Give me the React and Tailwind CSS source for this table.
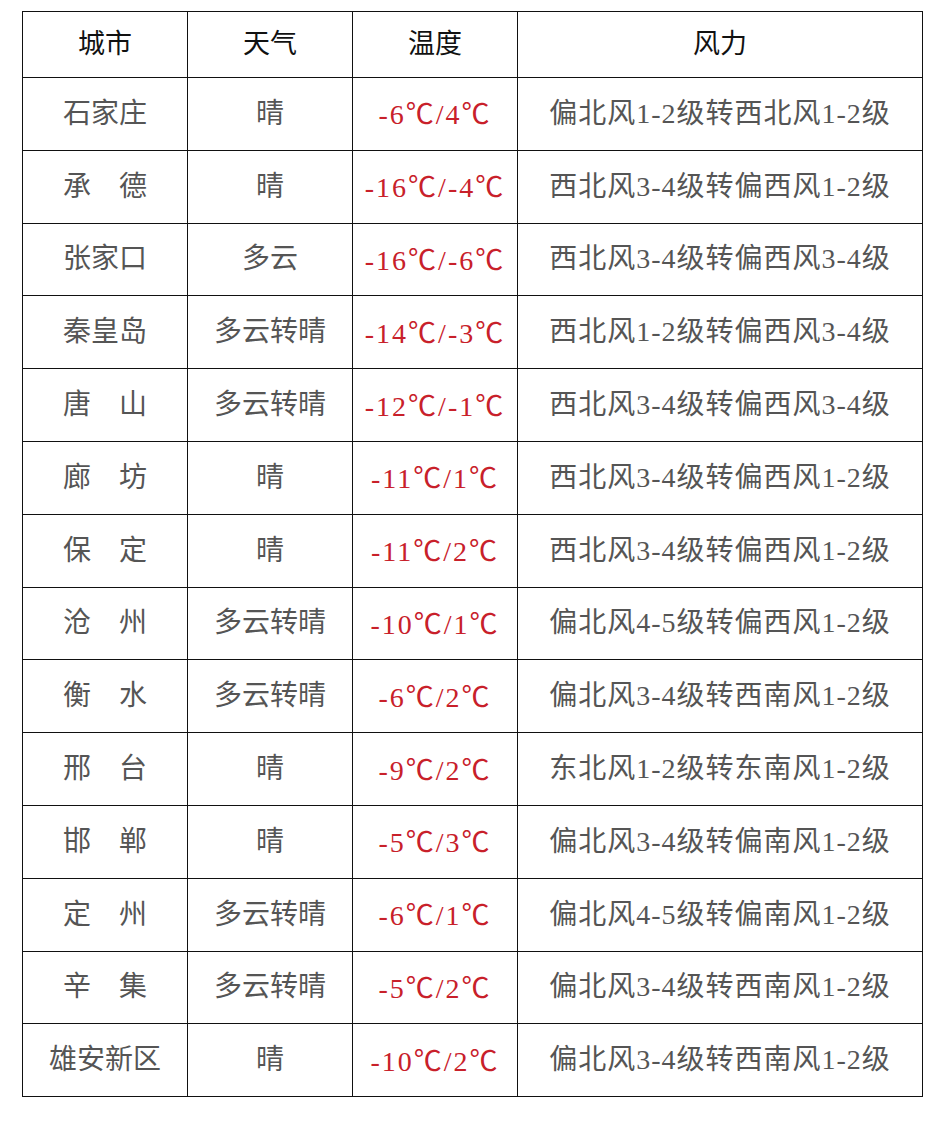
import React from "react";

const ROWS = [
  ["石家庄", "晴", "-6℃/4℃", "偏北风1-2级转西北风1-2级"],
  ["承　德", "晴", "-16℃/-4℃", "西北风3-4级转偏西风1-2级"],
  ["张家口", "多云", "-16℃/-6℃", "西北风3-4级转偏西风3-4级"],
  ["秦皇岛", "多云转晴", "-14℃/-3℃", "西北风1-2级转偏西风3-4级"],
  ["唐　山", "多云转晴", "-12℃/-1℃", "西北风3-4级转偏西风3-4级"],
  ["廊　坊", "晴", "-11℃/1℃", "西北风3-4级转偏西风1-2级"],
  ["保　定", "晴", "-11℃/2℃", "西北风3-4级转偏西风1-2级"],
  ["沧　州", "多云转晴", "-10℃/1℃", "偏北风4-5级转偏西风1-2级"],
  ["衡　水", "多云转晴", "-6℃/2℃", "偏北风3-4级转西南风1-2级"],
  ["邢　台", "晴", "-9℃/2℃", "东北风1-2级转东南风1-2级"],
  ["邯　郸", "晴", "-5℃/3℃", "偏北风3-4级转偏南风1-2级"],
  ["定　州", "多云转晴", "-6℃/1℃", "偏北风4-5级转偏南风1-2级"],
  ["辛　集", "多云转晴", "-5℃/2℃", "偏北风3-4级转西南风1-2级"],
  ["雄安新区", "晴", "-10℃/2℃", "偏北风3-4级转西南风1-2级"],
];

const FONT = { fontFamily: '"Liberation Serif", "Noto Sans CJK SC", serif' };

// ℃ drawn from the CJK font so it is full width, as in the original
function Temp({ value }) {
  const parts = value.split("℃");
  return (
    <>
      {parts.map((p, i) => (
        <React.Fragment key={i}>
          {p}
          {i < parts.length - 1 && (
            <span style={{ fontFamily: '"Noto Sans CJK SC", sans-serif' }}>℃</span>
          )}
        </React.Fragment>
      ))}
    </>
  );
}

export default function App() {
  return (
    <div className="w-[942px] h-[1141px] bg-white pt-[11px] pl-[22px]" style={FONT}>
      <table className="border-collapse table-fixed w-[901px]">
        <colgroup>
          <col className="w-[165px]" />
          <col className="w-[165px]" />
          <col className="w-[165px]" />
          <col />
        </colgroup>
        <thead>
          <tr className="h-[66px]">
            {["城市", "天气", "温度", "风力"].map((h) => (
              <th key={h} className="border-[1.5px] border-[#111] text-[27px] font-normal text-[#111] text-center">
                {h}
              </th>
            ))}
          </tr>
        </thead>
        <tbody>
          {ROWS.map(([city, weather, temp, wind]) => (
            <tr key={city} className="h-[72.8px]">
              <td className="border-[1.5px] border-[#111] text-[28px] text-[#555] text-center whitespace-nowrap">{city}</td>
              <td className="border-[1.5px] border-[#111] text-[28px] text-[#555] text-center whitespace-nowrap">{weather}</td>
              <td className="border-[1.5px] border-[#111] text-[28px] text-[#c8202a] text-center whitespace-nowrap tracking-[2px]">
                <Temp value={temp} />
              </td>
              <td className="border-[1.5px] border-[#111] text-[28px] text-[#555] text-center whitespace-nowrap tracking-[1px]">{wind}</td>
            </tr>
          ))}
        </tbody>
      </table>
    </div>
  );
}
